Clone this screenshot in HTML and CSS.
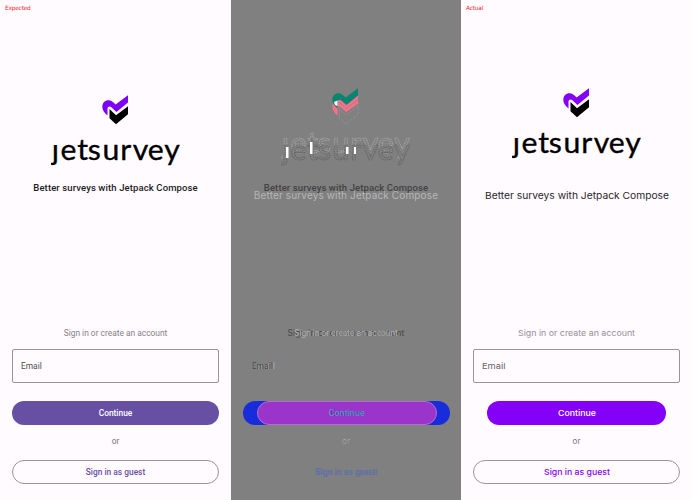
FILE: index.html
```html
<!DOCTYPE html>
<html lang="en">
<head>
<meta charset="utf-8">
<title>Jetsurvey sign in comparison</title>
<link rel="stylesheet" href="styles.css">
</head>
<body>
<svg class="defs" width="0" height="0" aria-hidden="true">
  <defs>
    <path id="heart" d="M5.5 20.5C2.5 18 .3 15.5 .3 11.8C.3 8 3 5.3 6.5 5.3C9 5.3 10.5 6.6 13.6 9.4L26 .3V7.6L14.4 17L9.4 12.3C7.6 10.8 5.5 11.8 5.5 13.8Z"/>
    <path id="check" d="M7.5 14L14 20.3L26 11.2V19.2L14 29.2L7.5 23.2Z"/>
    <clipPath id="stem"><path d="M-2 50H9V44H130V78H-2Z"/></clipPath>
  </defs>
</svg>
<main class="comparison">
  <section class="panel expected">
    <div class="tag">Expected</div>
    <svg class="logo" viewBox="0 0 130 76">
      <g transform="translate(51 0)"><use href="#heart" fill="#7e00f5"/><use href="#check"/></g>
      <g transform="scale(1.06 1)"><text class="wordmark" x="0.7 9 24.8 34.7 48.6 65.4 77.2 91.3 106.8" y="64.7" clip-path="url(#stem)">jetsurvey</text></g>
    </svg>
    <h1 class="tagline">Better surveys with Jetpack Compose</h1>
    <p class="prompt">Sign in or create an account</p>
    <div class="field">Email</div>
    <div class="button primary">Continue</div>
    <p class="or">or</p>
    <div class="button outline">Sign in as guest</div>
  </section>

  <section class="panel diff">
    <svg class="difflogo" viewBox="0 0 130 83">
      <g transform="translate(51 0)">
        <use href="#heart" y="7" fill="#ff7088"/>
        <use href="#heart" fill="#078570"/>
        <g class="trace"><use href="#check"/><use href="#check" y="7"/></g>
        <path d="M7.5 15L14.2 20.8L26 12.2V15.5L14.2 24L7.5 18Z" fill="#ff7088"/>
        <path d="M2 14L5.5 12.5V18L3 17Z" fill="#fff"/>
      </g>
      <g transform="scale(1.06 1)"><text class="wordmark ghost light" x="0.7 9 24.8 34.7 48.6 65.4 77.2 91.3 106.8" y="64.7" clip-path="url(#stem)">jetsurvey</text></g>
      <g transform="translate(0 7) scale(1.06 1)"><text class="wordmark ghost dark" x="0.7 9 24.8 34.7 48.6 65.4 77.2 91.3 106.8" y="64.7" clip-path="url(#stem)">jetsurvey</text></g>
      <path d="M5 59h2.5v11h-2.5ZM29 54h2.5v12h-2.5ZM65 59h2.5v7h-2.5ZM73 59h2v7h-2Z" fill="#fff"/>
    </svg>
    <div class="stack taglines"><span class="a">Better surveys with Jetpack Compose</span><span class="b">Better surveys with Jetpack Compose</span></div>
    <div class="stack prompts"><span class="b">Sign in or create an account</span><span class="a">Sign in or create an account</span></div>
    <div class="stack emails"><span class="b">Email</span><span class="a">Email</span></div>
    <div class="button wide"><div class="overlap stack"><span class="a">Continue</span><span class="b">Continue</span></div></div>
    <div class="stack ors"><span class="a">or</span><span class="b">or</span></div>
    <div class="stack guests"><span class="a">Sign in as guest</span><span class="b">Sign in as guest</span></div>
  </section>

  <section class="panel actual">
    <div class="tag">Actual</div>
    <svg class="logo" viewBox="0 0 130 76">
      <g transform="translate(51 0)"><use href="#heart" fill="#8400f6"/><use href="#check"/></g>
      <g transform="scale(1.06 1)"><text class="wordmark" x="0.7 9 24.8 34.7 48.6 65.4 77.2 91.3 106.8" y="64.7" clip-path="url(#stem)">jetsurvey</text></g>
    </svg>
    <svg class="line tagline" viewBox="0 0 230 14"><text x="24" y="10.5" textLength="184" lengthAdjust="spacingAndGlyphs">Better surveys with Jetpack Compose</text></svg>
    <svg class="line prompt" viewBox="0 0 230 14"><text x="57" y="10" textLength="117" lengthAdjust="spacingAndGlyphs">Sign in or create an account</text></svg>
    <div class="field"><svg class="word" viewBox="0 0 30 14"><text x="0" y="10" textLength="23.5" lengthAdjust="spacingAndGlyphs">Email</text></svg></div>
    <div class="button primary"><svg class="word cont" viewBox="0 0 40 14"><text x="1" y="10" textLength="38" lengthAdjust="spacingAndGlyphs">Continue</text></svg></div>
    <p class="or">or</p>
    <div class="button outline"><svg class="word guest" viewBox="0 0 68 14"><text x="1" y="10" textLength="66" lengthAdjust="spacingAndGlyphs">Sign in as guest</text></svg></div>
  </section>
</main>
</body>
</html>
```

FILE: styles.css
```css
* { box-sizing: border-box; }
body { margin: 0; background: #fffbff; }
.defs { display: block; }
.comparison { display: grid; grid-template-columns: 231px 230px 231px; height: 500px; overflow: hidden; }
.panel { display: flex; flex-direction: column; height: 500px; padding: 0 12px; font: 8.4px/14px Roboto, sans-serif; color: #1c1b1e; background: #fffbff; overflow: hidden; }
.tag { height: 16px; margin-left: -7px; font: 5.8px/16px "DejaVu Sans", sans-serif; letter-spacing: -.18px; color: #f22; }
.logo { display: block; flex: none; align-self: center; width: 130px; height: 76px; margin-top: 79px; }
.wordmark { font: 28.5px Lato, sans-serif; stroke: #000; stroke-width: .35px; stroke-linejoin: round; }
h1, p { margin: 0; text-align: center; }
.expected .tagline { margin-top: 10px; font-size: 9.5px; line-height: 14px; font-weight: 500; letter-spacing: .11px; white-space: nowrap; }
.expected .prompt { margin-top: 131px; color: #858286; white-space: nowrap; }
.field { flex: none; display: flex; align-items: center; width: 207px; height: 34px; margin-top: 9px; padding-left: 8px; border: 1px solid #99949b; border-radius: 2px; color: #504b54; }
.button { flex: none; display: flex; align-items: center; justify-content: center; width: 207px; height: 24px; border-radius: 12px; font-weight: 500; }
.primary { margin-top: 18px; background: #6750a4; color: #fff; }
.or { height: 14px; margin-top: 9px; color: #777379; }
.outline { margin-top: 12px; border: 1px solid #99949b; color: #6750a4; }

.actual .logo { margin-top: 72px; }
.line { flex: none; width: 230px; height: 14px; margin-left: -12px; font: 9.2px Inter, sans-serif; fill: #29262b; }
.actual .tagline { margin-top: 24px; }
.actual .prompt { margin-top: 124px; font-size: 8.1px; fill: #959098; }
.word { width: 30px; height: 14px; font: 8.1px Inter, sans-serif; fill: #69636c; }
.actual .primary { width: 179px; align-self: center; background: #8400f6; }
.cont { width: 40px; font-weight: 500; fill: #fff; }
.guest { width: 68px; font-weight: 500; fill: #8400f6; }
.actual .or { font: 8px/14px Inter, sans-serif; }

.diff { background: #808080; }
.difflogo { flex: none; display: block; width: 130px; height: 83px; margin: 88px 0 0 38px; }
.trace { fill: #808080; stroke: #b29fa6; stroke-width: .6px; stroke-dasharray: 1 1; }
.ghost { fill: #808080; fill-opacity: .5; stroke-width: .6px; stroke-dasharray: 1.5 .7; }
.light { stroke: #b6b6b6; }
.dark { stroke: #555; }
.stack { display: grid; flex: none; justify-items: center; white-space: nowrap; }
.stack > span { grid-area: 1 / 1; }
.diff .a { color: #424242; }
.diff .b { color: #b7b7b7; font-family: Inter, sans-serif; }
.diff .taglines { margin-top: 10px; height: 21px; font-size: 9.5px; letter-spacing: .11px; }
.taglines .a { font-weight: 500; }
.taglines .b { margin-top: 7px; font-size: 10px; letter-spacing: .14px; }
.prompts { margin-top: 124px; height: 14px; }
.diff .prompts .a { color: #b2b2b2; }
.diff .prompts .b { color: #464646; letter-spacing: .22px; }
.emails { justify-items: start; height: 14px; margin: 19px 0 0 9px; }
.emails .b { letter-spacing: .4px; }
.wide { margin-top: 28px; background: #182cdc; }
.overlap { align-content: center; width: 180px; height: 24px; border: 1px solid #b071cb; border-radius: 12px; background: #9a34ca; }
.diff .overlap .a { color: #3945d0; }
.diff .overlap .b { color: #68b5a5; opacity: .75; }
.ors { height: 14px; margin-top: 9px; }
.guests { height: 14px; margin-top: 17px; font-weight: 500; }
.diff .guests .a { color: #9a54bd; }
.diff .guests .b { color: #20928e; opacity: .65; }
```
